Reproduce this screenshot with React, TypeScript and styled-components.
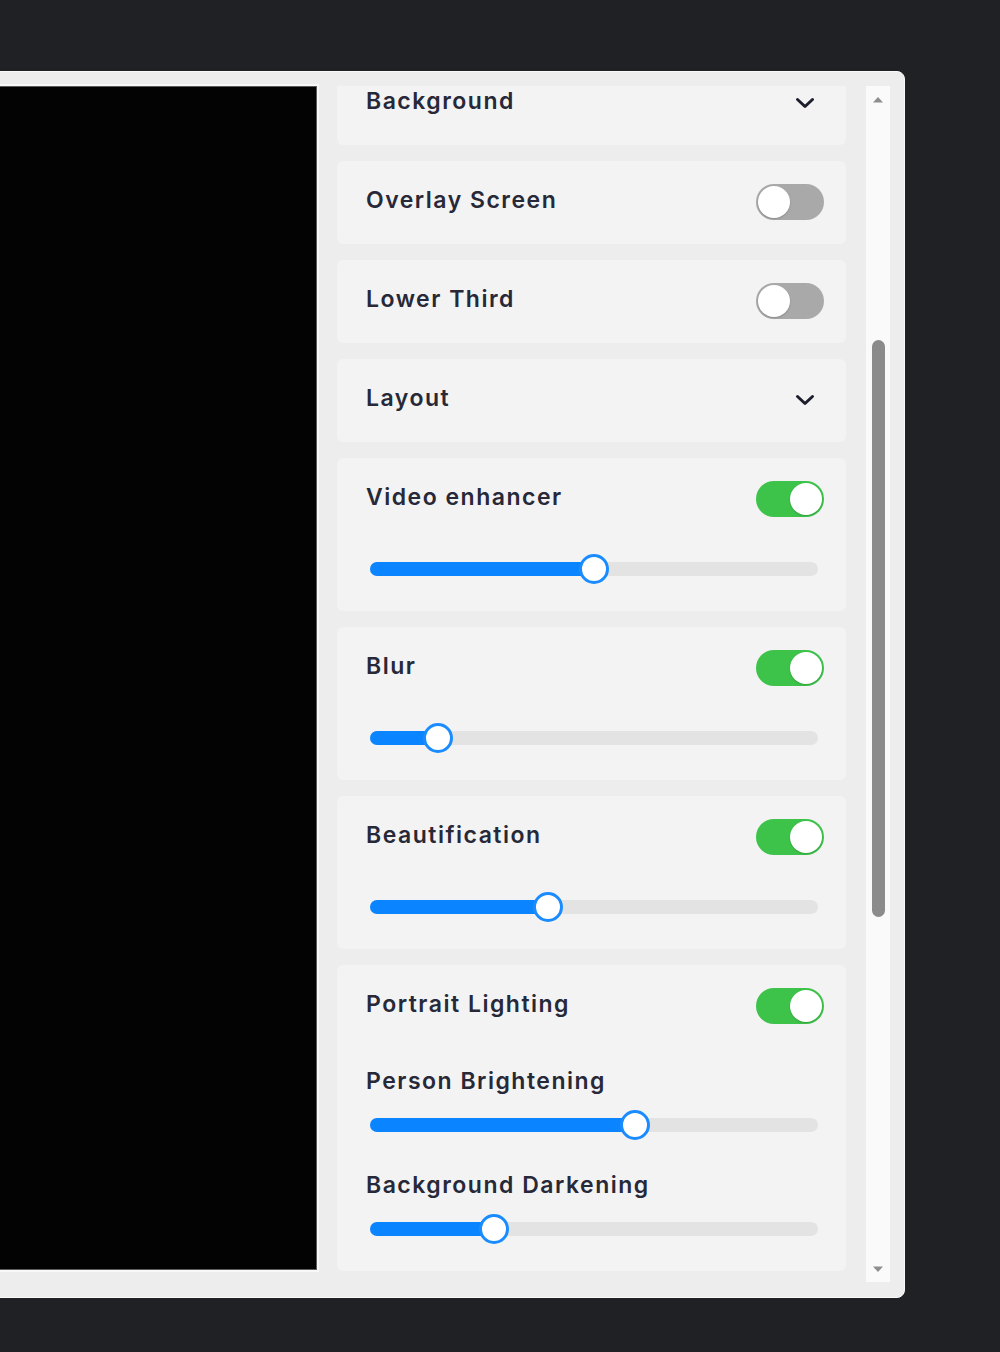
import { useLayoutEffect, useRef } from 'react';
import styled, { createGlobalStyle } from 'styled-components';

const GlobalStyle = createGlobalStyle`
  body {
    margin: 0;
    background: #202124;
    overflow: hidden;
    font-family: Inter, 'Noto Sans', sans-serif;
  }
`;

const Page = styled.div`
  height: 1352px;
  padding-top: 71px;
  box-sizing: border-box;
`;

const Dialog = styled.div`
  width: 1300px;
  margin-left: -395px;
  box-sizing: border-box;
  padding: 14px 14px 15px 15px;
  display: flex;
  gap: 20px;
  background: #ededed;
  border: 1px solid #fafafa;
  border-radius: 8px;
`;

const Video = styled.div`
  flex: 1;
  height: 1184px;
  background: #030303;
  border: 1px solid #5c5c5c;
  box-shadow: 0 0 0 2px #f8f8f8;
  box-sizing: border-box;
`;

const Sidebar = styled.div`
  display: flex;
  gap: 20px;
  height: 1196px;
`;

const CardList = styled.div`
  width: 509px;
  overflow: hidden;
  display: flex;
  flex-direction: column;
  gap: 16px;
  padding-bottom: 48px;
  box-sizing: border-box;
`;

const Card = styled.div`
  flex-shrink: 0;
  background: #f3f3f3;
  border-radius: 6px;
  padding: 22px 22px 23px 29px;
  display: flex;
  flex-direction: column;
`;

const Header = styled.div`
  height: 38px;
  display: flex;
  align-items: center;
  justify-content: space-between;
`;

const Title = styled.span`
  font-size: 23px;
  font-weight: 600;
  letter-spacing: 1.5px;
  color: #272838;
  line-height: 30px;
  margin-bottom: 4px;
`;

const SubLabel = styled(Title)<{ $gap: number }>`
  margin-top: ${(p) => p.$gap}px;
  margin-bottom: 0;
`;

const Switch = styled.div<{ $on: boolean }>`
  width: 68px;
  height: 36px;
  box-sizing: border-box;
  padding: 2px;
  border-radius: 18px;
  background: ${(p) => (p.$on ? '#3ec34a' : '#a9a9a9')};
  display: flex;
  justify-content: ${(p) => (p.$on ? 'flex-end' : 'flex-start')};
`;

const Knob = styled.div`
  width: 32px;
  height: 32px;
  border-radius: 50%;
  background: #fff;
  box-shadow: 0 1px 2px rgba(0, 0, 0, 0.18);
`;

const Chevron = styled.svg`
  margin-right: 9px;
`;

const SliderRow = styled.div<{ $gap: number }>`
  height: 38px;
  margin: ${(p) => p.$gap}px 6px 0 4px;
  display: flex;
  align-items: center;
`;

const Track = styled.div`
  position: relative;
  flex: 1;
  height: 14px;
  border-radius: 7px;
  background: #e3e3e3;
`;

const Fill = styled.div`
  position: absolute;
  left: 0;
  top: 0;
  bottom: 0;
  border-radius: 7px;
  background: #0a84ff;
`;

const Thumb = styled.div`
  position: absolute;
  top: 50%;
  width: 30px;
  height: 30px;
  box-sizing: border-box;
  border-radius: 50%;
  border: 3px solid #1a8cff;
  background: #fff;
  transform: translate(-50%, -50%);
`;

const ScrollBar = styled.div`
  width: 24px;
  background: #fafafa;
  display: flex;
  flex-direction: column;
  align-items: center;
`;

const ArrowButton = styled.div`
  height: 26px;
  display: flex;
  align-items: center;
  justify-content: center;
`;

const ThumbTrack = styled.div`
  flex: 1;
`;

const ScrollThumb = styled.div<{ $top: number; $size: number }>`
  width: 13px;
  height: ${(p) => p.$size}px;
  margin-top: ${(p) => p.$top}px;
  border-radius: 7px;
  background: #8b8b8b;
`;

function Toggle({ on }: { on: boolean }) {
  return (
    <Switch $on={on}>
      <Knob />
    </Switch>
  );
}

function Slider({ value, gap }: { value: number; gap: number }) {
  return (
    <SliderRow $gap={gap}>
      <Track>
        <Fill style={{ width: `${value}%` }} />
        <Thumb style={{ left: `${value}%` }} />
      </Track>
    </SliderRow>
  );
}

function ChevronDown() {
  return (
    <Chevron width="20" height="12" viewBox="0 0 20 12">
      <path d="M2.5 2.5 L10 9.5 L17.5 2.5" fill="none" stroke="#1d1e2c" strokeWidth="3" strokeLinecap="round" strokeLinejoin="round" />
    </Chevron>
  );
}

function Triangle({ up }: { up?: boolean }) {
  return (
    <svg width="12" height="7" viewBox="0 0 12 7">
      <path d={up ? 'M1 6.5 L6 1 L11 6.5 Z' : 'M1 0.5 L6 6 L11 0.5 Z'} fill="#8e8e8e" />
    </svg>
  );
}

function DropdownCard({ title }: { title: string }) {
  return (
    <Card>
      <Header>
        <Title>{title}</Title>
        <ChevronDown />
      </Header>
    </Card>
  );
}

function ToggleCard({ title, on, value }: { title: string; on: boolean; value?: number }) {
  return (
    <Card>
      <Header>
        <Title>{title}</Title>
        <Toggle on={on} />
      </Header>
      {value !== undefined && <Slider value={value} gap={32} />}
    </Card>
  );
}

export default function App() {
  const listRef = useRef<HTMLDivElement>(null);

  useLayoutEffect(() => {
    if (listRef.current) listRef.current.scrollTop = 24;
  }, []);

  return (
    <>
      <GlobalStyle />
      <Page>
        <Dialog>
          <Video />
          <Sidebar>
            <CardList ref={listRef}>
              <DropdownCard title="Background" />
              <ToggleCard title="Overlay Screen" on={false} />
              <ToggleCard title="Lower Third" on={false} />
              <DropdownCard title="Layout" />
              <ToggleCard title="Video enhancer" on value={50} />
              <ToggleCard title="Blur" on value={15.2} />
              <ToggleCard title="Beautification" on value={39.7} />
              <Card>
                <Header>
                  <Title>Portrait Lighting</Title>
                  <Toggle on />
                </Header>
                <SubLabel $gap={41}>Person Brightening</SubLabel>
                <Slider value={59.2} gap={10} />
                <SubLabel $gap={26}>Background Darkening</SubLabel>
                <Slider value={27.7} gap={10} />
              </Card>
            </CardList>
            <ScrollBar>
              <ArrowButton>
                <Triangle up />
              </ArrowButton>
              <ThumbTrack>
                <ScrollThumb $top={228} $size={577} />
              </ThumbTrack>
              <ArrowButton>
                <Triangle />
              </ArrowButton>
            </ScrollBar>
          </Sidebar>
        </Dialog>
      </Page>
    </>
  );
}
